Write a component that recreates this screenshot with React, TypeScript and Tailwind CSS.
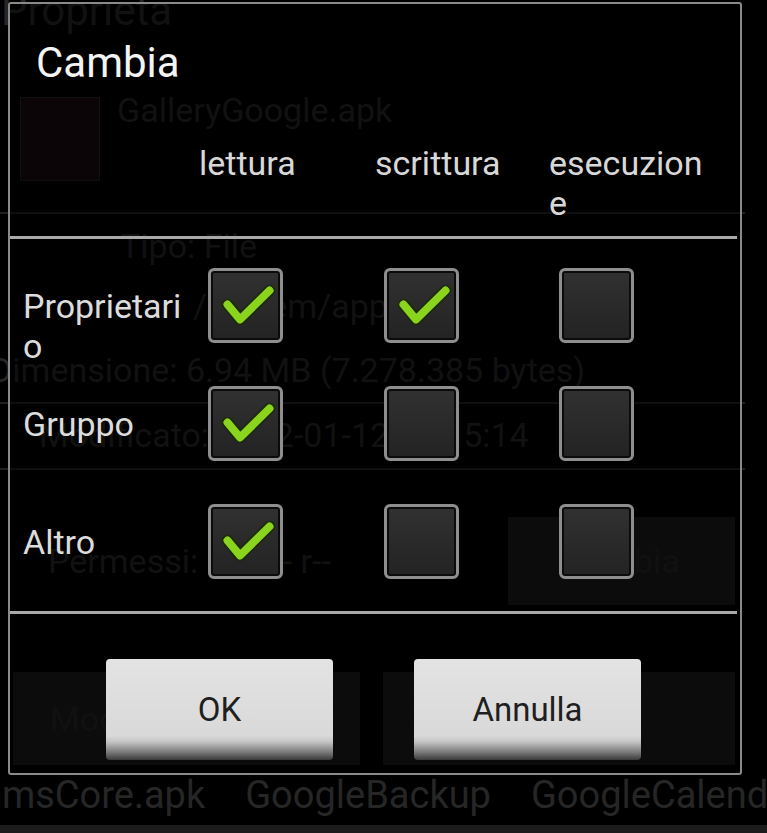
import React from "react";

type Perm = { label: string; values: [boolean, boolean, boolean] };

const rows: Perm[] = [
  { label: "Proprietario", values: [true, true, false] },
  { label: "Gruppo", values: [true, false, false] },
  { label: "Altro", values: [true, false, false] },
];

function CheckBox({ checked }: { checked: boolean }) {
  return (
    <div className="w-[75px] h-[75px] rounded-[6px] border-[3px] border-[#8e8e8e] bg-[linear-gradient(to_bottom,#313131,#232323)] shadow-[inset_0_0_0_2px_#0b0b0b]">
      {checked && (
        <svg viewBox="0 0 69 69" className="block w-full h-full">
          <polyline
            points="16.5,33.5 29,48.5 58.5,19.5"
            fill="none"
            stroke="#1d2a0c"
            strokeWidth="11.5"
            strokeLinecap="round"
            strokeLinejoin="round"
          />
          <polyline
            points="16.5,33.5 29,48.5 58.5,19.5"
            fill="none"
            stroke="#8bd41e"
            strokeWidth="8"
            strokeLinecap="round"
            strokeLinejoin="round"
          />
        </svg>
      )}
    </div>
  );
}

function DialogButton({ text }: { text: string }) {
  return (
    <button className="w-[227px] h-[101px] rounded-[4px] bg-[linear-gradient(to_bottom,#e3e3e3_0%,#d9d9d9_76%,#c4c4c4_82%,#7c7c7c_92%,#3a3a3a_100%)] text-[33px] text-[#1f1f1f] flex items-center justify-center">
      {text}
    </button>
  );
}

// faded file-properties screen behind the dialog
function Background() {
  return (
    <div className="flex flex-col text-[#262626] text-[34px] leading-[40px] whitespace-nowrap">
      <div className="-mt-[10px] h-[42px] pl-[1px] text-[42px] leading-[42px]">Proprietà</div>

      <div className="mt-[58px] flex items-start">
        <div className="ml-[20px] mt-[7px] w-[80px] h-[84px] border border-[#222] bg-[#1a0c11]" />
        <div className="ml-[17px]">GalleryGoogle.apk</div>
      </div>

      <div className="mt-[31px] h-[2px] mr-[22px] bg-[#222]" />
      <div className="mt-[12px] pl-[120px]">Tipo: File</div>
      <div className="mt-[20px] pl-[193px]">/system/app</div>
      <div className="mt-[24px] -ml-[10px]">Dimensione: 6.94 MB (7.278.385 bytes)</div>
      <div className="mt-[12px] h-[2px] mr-[22px] bg-[#222]" />
      <div className="mt-[11px] pl-[39px]">Modificato: 2012-01-12 18:15:14</div>
      <div className="mt-[13px] h-[2px] mr-[22px] bg-[#222]" />

      <div className="mt-[47px] h-[88px] flex items-center">
        <div className="flex-1 pl-[48px]">Permessi: rw- r-- r--</div>
        <div className="w-[227px] h-[88px] mr-[32px] bg-[#1b1b1b] flex items-center justify-center">Cambia</div>
      </div>

      <div className="mt-[67px] h-[93px] flex gap-[23px] pl-[13px]">
        <div className="w-[347px] bg-[#1b1b1b] flex items-center pl-[37px]">Modifica permessi</div>
        <div className="w-[352px] bg-[#1b1b1b] flex items-center justify-center">Elimina</div>
      </div>

      <div className="mt-[8px] h-[44px] flex gap-[40px] -ml-[24px] text-[38px] leading-[44px]">
        <span>GmsCore.apk</span>
        <span>GoogleBackup</span>
        <span>GoogleCalendar</span>
      </div>

      <div className="mt-[8px] h-[20px] bg-[#1c1c1c]" />
    </div>
  );
}

export default function App() {
  return (
    <div className="relative w-[767px] h-[833px] overflow-hidden bg-black font-['Roboto','Noto_Sans',sans-serif]">
      <Background />

      {/* Permissions dialog */}
      <div className="absolute left-[8px] top-[2px] w-[734px] h-[773px] rounded-[3px] border-2 border-[#8a8a8a] bg-black/55 flex flex-col">
        <div className="pt-[38px] pl-[26px] text-[42px] leading-[42px] text-[#f4f4f4]">Cambia</div>

        <div className="mt-[59px] flex text-[34px] leading-[40px] text-[#d8d8d8]">
          <div className="w-[189px]" />
          <div className="w-[176px]">lettura</div>
          <div className="w-[174px]">scrittura</div>
          <div className="w-[165px] break-all">esecuzione</div>
        </div>

        <div className="mt-[13px] mr-[3px] h-[3px] bg-[#a9a9a9]" />

        <div className="pt-[29px] flex flex-col gap-[43px]">
          {rows.map((r) => (
            <div key={r.label} className="h-[75px] flex items-start">
              <div className="w-[189px] pl-[13px] pt-[18px] break-all text-[34px] leading-[40px] text-[#dcdcdc]">
                {r.label}
              </div>
              <div className="w-[176px] pl-[9px]">
                <CheckBox checked={r.values[0]} />
              </div>
              <div className="w-[174px] pl-[9px]">
                <CheckBox checked={r.values[1]} />
              </div>
              <div className="w-[165px] pl-[10px]">
                <CheckBox checked={r.values[2]} />
              </div>
            </div>
          ))}
        </div>

        <div className="mt-[32px] mr-[3px] h-[3px] bg-[#a9a9a9]" />

        <div className="mt-[45px] pr-[3px] flex justify-center gap-[81px]">
          <DialogButton text="OK" />
          <DialogButton text="Annulla" />
        </div>
      </div>
    </div>
  );
}
